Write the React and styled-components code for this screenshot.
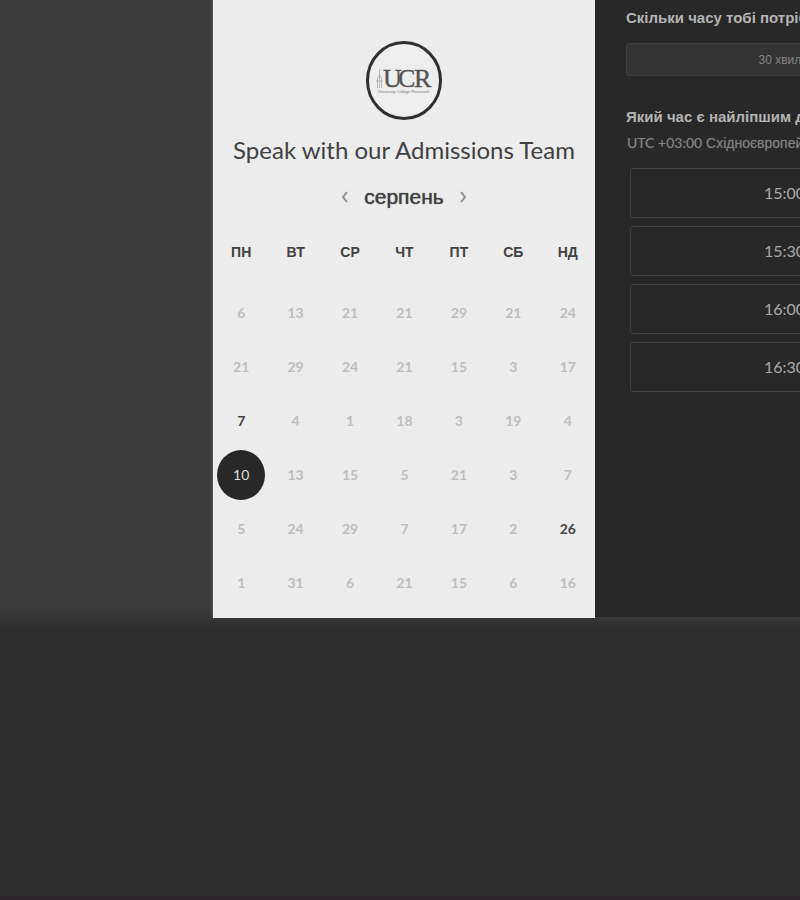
import React, { useState } from "react";
import styled, { createGlobalStyle } from "styled-components";

const latin = `Lato, "Open Sans", sans-serif`;
const cyrillic = `"Liberation Sans", Arial, sans-serif`;

const GlobalStyle = createGlobalStyle`
  *, *::before, *::after { box-sizing: border-box; }
  body { margin: 0; background: #2d2d2d; font-family: ${cyrillic}; }
  button { margin: 0; padding: 0; border: 0; background: none; font: inherit; color: inherit; cursor: pointer; }
  h1, h2, p { margin: 0; font-weight: 400; }
`;

const Page = styled.div`
  display: flex;
  flex-direction: column;
  min-height: 100vh;
  overflow: hidden;
`;

const Scheduler = styled.main`
  display: grid;
  grid-template-columns: 213px 382px 383px;
  background: linear-gradient(to bottom, #3c3c3c calc(100% - 12px), #353535 100%);
`;

const CalendarPanel = styled.section`
  grid-column: 2;
  display: flex;
  flex-direction: column;
  align-items: center;
  padding: 41px 0 8px;
  background: #ececec;
  box-shadow: 0 0 2px #888888;
  color: #414141;
`;

const Logo = styled.svg`
  display: block;
  width: 76px;
  height: 79px;
`;

const Title = styled.h1`
  margin-top: 14px;
  font: 400 24px/32px ${latin};
  white-space: nowrap;
`;

const MonthBar = styled.div`
  display: flex;
  align-items: center;
  gap: 12px;
  height: 32px;
  margin-top: 15px;
`;

const MonthName = styled.h2`
  font-size: 21px;
  line-height: 32px;
  text-shadow: 0 0 1px #414141;
`;

const MonthButton = styled.button`
  display: flex;
  align-items: center;
  justify-content: center;
  width: 14px;
  height: 28px;
  color: #8e8e8e;
`;

const DatesArea = styled.div`
  align-self: stretch;
  margin-top: 25px;
  padding-left: 1px;
`;

const Dates = styled.table`
  width: 100%;
  table-layout: fixed;
  border-collapse: collapse;
`;

const Weekday = styled.th`
  height: 48px;
  padding: 0 0 20px;
  font-size: 14px;
  line-height: 28px;
  font-weight: 700;
`;

const DayCell = styled.td`
  height: 54px;
  padding: 0;
  text-align: center;
`;

const tones = {
  muted: "color: #bebebe; font-weight: 700;",
  open: "color: #444444; font-weight: 700;",
  selected: "color: #dddddd; background: #282828; font-weight: 400;",
};

const Day = styled.button`
  width: 48px;
  height: 50px;
  border-radius: 50%;
  font-family: ${latin};
  font-size: 14px;
  line-height: 20px;
  vertical-align: middle;
  ${({ $tone }) => tones[$tone]}
`;

const TimePanel = styled.section`
  display: flex;
  flex-direction: column;
  padding: 6px 31px 0;
  background: #282828;
  border-bottom: 1px solid #3a3a3a;
  color: #b4b4b4;
`;

const Question = styled.h2`
  font-size: 15px;
  line-height: 24px;
  font-weight: 700;
  white-space: nowrap;
`;

const Duration = styled.button`
  height: 33px;
  margin: 13px 0 29px;
  border: 1px solid #404040;
  border-radius: 3px;
  background: #343434;
  color: #848484;
  font-size: 12px;
`;

const Zone = styled.p`
  padding-left: 1px;
  color: #828282;
  font-size: 14px;
  line-height: 28px;
  white-space: nowrap;
  text-shadow: 0 0 1px #555555;
`;

const Offset = styled.span`
  font-family: ${latin};
`;

const Slots = styled.div`
  display: flex;
  flex-direction: column;
  gap: 8px;
  margin-top: 11px;
  padding: 0 8px 0 4px;
`;

const Slot = styled.button`
  height: 50px;
  padding-bottom: 2px;
  border: 1px solid #404040;
  border-radius: 3px;
  color: #a9a9a9;
  font-family: ${latin};
  font-size: 16px;
`;

const Lower = styled.div`
  flex: 1;
  min-height: 40px;
  background: linear-gradient(to bottom, #363636, #2d2d2d 12px);
`;

const BottomEdge = styled.footer`
  height: 4px;
  background: #2c242a;
`;

const weekdays = ["ПН", "ВТ", "СР", "ЧТ", "ПТ", "СБ", "НД"];
const weeks = [
  [6, 13, 21, 21, 29, 21, 24],
  [21, 29, 24, 21, 15, 3, 17],
  [7, 4, 1, 18, 3, 19, 4],
  [10, 13, 15, 5, 21, 3, 7],
  [5, 24, 29, 7, 17, 2, 26],
  [1, 31, 6, 21, 15, 6, 16],
];
const openDays = ["2-0", "4-6"];
const times = ["15:00", "15:30", "16:00", "16:30"];

function CollegeLogo() {
  return (
    <Logo viewBox="0 0 76 79" role="img" aria-label="University College Roosevelt">
      <ellipse cx="38" cy="39.5" rx="36.5" ry="38" fill="#eeeeee" stroke="#303030" strokeWidth="3" />
      <path
        d="M11.5 47V37l2-3 2 3v10M13.5 47V28M10 40h7"
        fill="none"
        stroke="#aaaaaa"
        strokeWidth="0.8"
      />
      <g fill="#555555" stroke="#555555" strokeWidth="0.4" fontFamily="Liberation Serif, serif" fontSize="26">
        <text x="17" y="46">U</text>
        <text x="32" y="46">C</text>
        <text x="48" y="46">R</text>
      </g>
      <text x="12" y="52" fontSize="4" fontFamily="Liberation Sans, sans-serif" fill="#777777">
        University College Roosevelt
      </text>
    </Logo>
  );
}

function Chevron({ d }) {
  return (
    <svg width="8" height="12" viewBox="0 0 8 12" fill="none" stroke="currentColor" strokeWidth="2" aria-hidden="true">
      <path d={d} />
    </svg>
  );
}

export default function App() {
  const [selected, setSelected] = useState("3-0");
  const toneOf = (key) =>
    key === selected ? "selected" : openDays.includes(key) ? "open" : "muted";

  return (
    <>
      <GlobalStyle />
      <Page>
        <Scheduler>
          <CalendarPanel>
            <CollegeLogo />
            <Title>Speak with our Admissions Team</Title>
            <MonthBar>
              <MonthButton type="button" aria-label="Попередній місяць">
                <Chevron d="M6 1 2 6l4 5" />
              </MonthButton>
              <MonthName>серпень</MonthName>
              <MonthButton type="button" aria-label="Наступний місяць">
                <Chevron d="m2 1 4 5-4 5" />
              </MonthButton>
            </MonthBar>
            <DatesArea>
              <Dates>
                <thead>
                  <tr>
                    {weekdays.map((name) => (
                      <Weekday key={name} scope="col">{name}</Weekday>
                    ))}
                  </tr>
                </thead>
                <tbody>
                  {weeks.map((week, row) => (
                    <tr key={row}>
                      {week.map((day, column) => {
                        const key = `${row}-${column}`;
                        return (
                          <DayCell key={key}>
                            <Day
                              type="button"
                              $tone={toneOf(key)}
                              aria-pressed={key === selected}
                              onClick={() => setSelected(key)}
                            >
                              {day}
                            </Day>
                          </DayCell>
                        );
                      })}
                    </tr>
                  ))}
                </tbody>
              </Dates>
            </DatesArea>
          </CalendarPanel>
          <TimePanel>
            <Question>Скільки часу тобі потрібно?</Question>
            <Duration type="button">30 хвилин</Duration>
            <Question>Який час є найліпшим для тебе?</Question>
            <Zone>
              <Offset>UTC +03:00</Offset> Східноєвропейський час
            </Zone>
            <Slots>
              {times.map((time) => (
                <Slot key={time} type="button">{time}</Slot>
              ))}
            </Slots>
          </TimePanel>
        </Scheduler>
        <Lower />
        <BottomEdge />
      </Page>
    </>
  );
}
